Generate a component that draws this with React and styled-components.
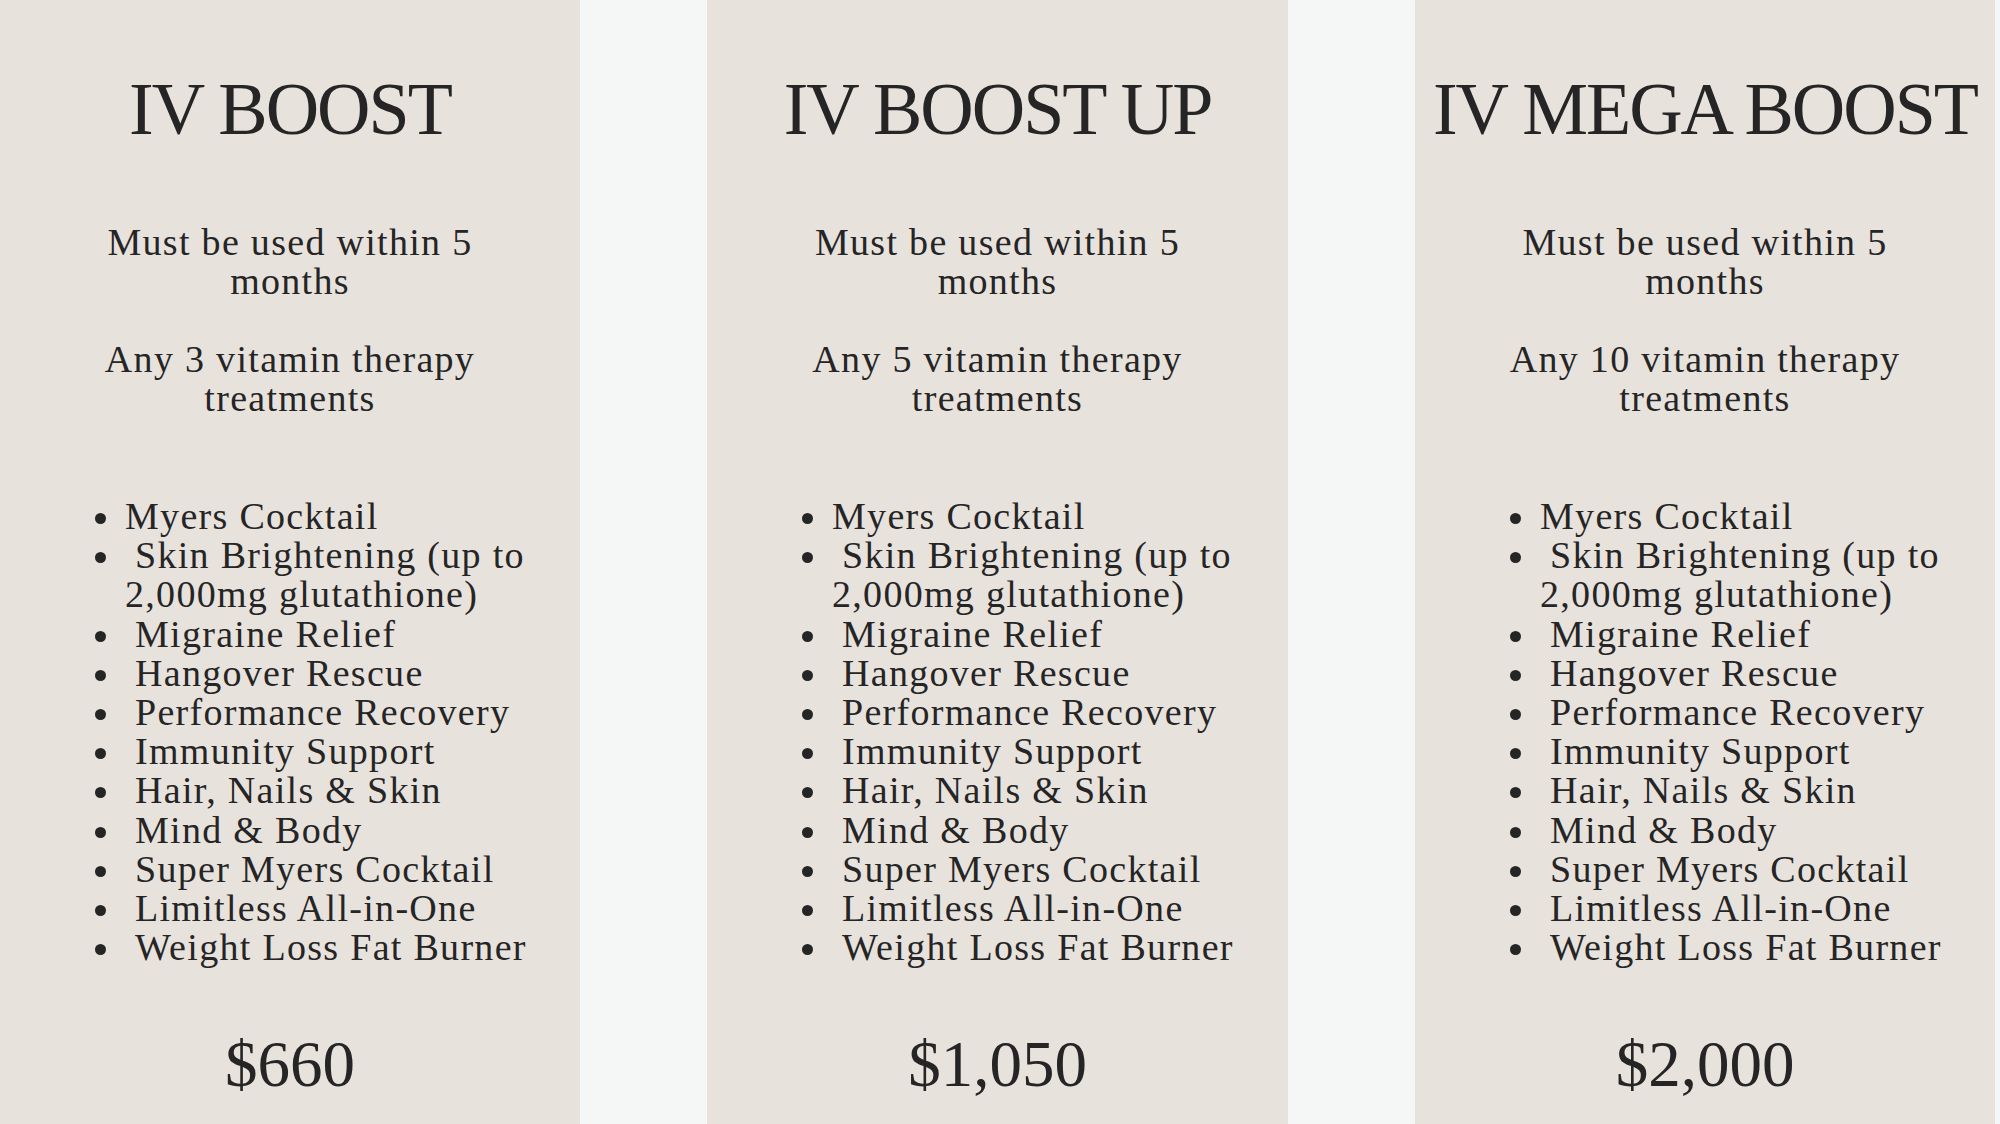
import React from 'react';
import styled, { createGlobalStyle } from "styled-components";

const plans = [
    { name: "IV BOOST", count: 3, price: "$660" },
    { name: "IV BOOST UP", count: 5, price: "$1,050" },
    { name: "IV MEGA BOOST", count: 10, price: "$2,000" },
];

const treatments = [
    "Myers Cocktail",
    "Skin Brightening (up to 2,000mg glutathione)",
    "Migraine Relief",
    "Hangover Rescue",
    "Performance Recovery",
    "Immunity Support",
    "Hair, Nails & Skin",
    "Mind & Body",
    "Super Myers Cocktail",
    "Limitless All-in-One",
    "Weight Loss Fat Burner",
];

const App = () => {
    return (
        <>
            <GlobalStyle />
            <Page>
                {plans.map((plan) => (
                    <Panel key={plan.name}>
                        <Title>{plan.name}</Title>
                        <Info>
                            <Para>Must be used within 5 months</Para>
                            <Para>Any {plan.count} vitamin therapy treatments</Para>
                        </Info>
                        <List>
                            {treatments.map((t, i) => (
                                <Item key={t} $lead={i > 0}>{t}</Item>
                            ))}
                        </List>
                        <Price>{plan.price}</Price>
                    </Panel>
                ))}
            </Page>
        </>
    );
}

export default App;


const GlobalStyle = createGlobalStyle`
    html, body {
        margin: 0;
        padding: 0;
        background: #f5f7f7;
    }
`

const Page = styled.div`
    width: 2000px;
    height: 1124px;
    display: grid;
    grid-template-columns: 580px 581px 580px;
    column-gap: 127px;
    background: #f5f7f7;
    color: #252525;
    font-family: "Liberation Serif", "Times New Roman", serif;
    overflow: hidden;
`

const Panel = styled.div`
    background-color: #e8e2dd;
    padding-top: 72px;
    display: flex;
    flex-direction: column;
    align-items: center;
`

const Title = styled.h1`
    margin: 0;
    font-size: 74px;
    line-height: 74px;
    font-weight: 400;
    letter-spacing: -2px;
    white-space: nowrap;
`

const Info = styled.div`
    width: 430px;
    margin-top: 77px;
    text-align: center;
    font-size: 38px;
    line-height: 39px;
    letter-spacing: 1.3px;
`

const Para = styled.p`
    margin: 0 0 39px;

    &:last-child {
        margin-bottom: 0;
    }
`

const List = styled.ul`
    align-self: stretch;
    list-style: none;
    margin: 79px 0 0;
    padding: 0 0 0 95px;
    font-size: 38px;
    line-height: 39.2px;
    letter-spacing: 1.3px;
`

const Item = styled.li`
    display: grid;
    grid-template-columns: 30px 1fr;
    text-indent: ${(p) => (p.$lead ? "10px" : "0")};

    &::before {
        content: "";
        width: 11px;
        height: 11px;
        margin-top: 16px;
        border-radius: 50%;
        background: #252525;
    }
`

const Price = styled.div`
    margin-top: 65px;
    font-size: 65px;
    line-height: 65px;
    letter-spacing: 0;
`
